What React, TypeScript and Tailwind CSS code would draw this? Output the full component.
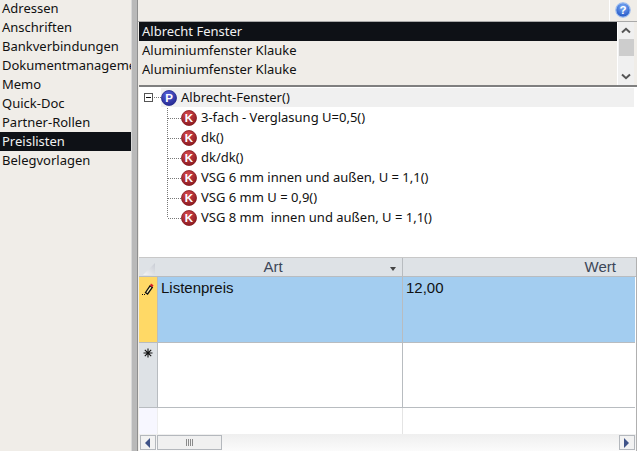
import React from 'react';

const sideItems = [
  'Adressen',
  'Anschriften',
  'Bankverbindungen',
  'Dokumentmanagement',
  'Memo',
  'Quick-Doc',
  'Partner-Rollen',
  'Preislisten',
  'Belegvorlagen',
];

const treeItems = [
  '3-fach - Verglasung U=0,5()',
  'dk()',
  'dk/dk()',
  'VSG 6 mm innen und außen, U = 1,1()',
  'VSG 6 mm U = 0,9()',
  'VSG 8 mm  innen und außen, U = 1,1()',
];

function Ball({ letter, id, light, dark }: { letter: string; id: string; light: string; dark: string }) {
  return (
    <svg width="16" height="16" viewBox="0 0 16 16" className="shrink-0">
      <defs>
        <radialGradient id={id} cx="0.4" cy="0.25" r="0.85">
          <stop offset="0" stopColor={light} />
          <stop offset="1" stopColor={dark} />
        </radialGradient>
      </defs>
      <circle cx="8" cy="8" r="7.5" fill={`url(#${id})`} stroke={dark} strokeWidth="0.8" />
      <text x="8" y="12.2" textAnchor="middle" fontSize="11.5" fontWeight="700" fill="#fff" fontFamily="Liberation Sans, sans-serif">
        {letter}
      </text>
    </svg>
  );
}

function ScrollButton({ dir }: { dir: 'left' | 'right' }) {
  return (
    <div className="w-[16px] h-[15px] shrink-0 border border-[#b4b8bd] bg-[#f2f2f2] flex items-center justify-center">
      <svg width="6" height="10" viewBox="0 0 6 10">
        <path d={dir === 'left' ? 'M5 0V10L0 5Z' : 'M0 0V10L5 5Z'} fill="#3f5388" />
      </svg>
    </div>
  );
}

function Chevron({ up }: { up?: boolean }) {
  return (
    <svg width="10" height="7" viewBox="0 0 10 7">
      <path d={up ? 'M1 5.5L5 1.8L9 5.5' : 'M1 1.5L5 5.2L9 1.5'} fill="none" stroke="#555" strokeWidth="2" />
    </svg>
  );
}

export default function App() {
  return (
    <div className="w-[637px] h-[451px] overflow-hidden flex bg-[#f0ede8] text-[#111] text-[13px] font-['Noto_Sans','Open_Sans',sans-serif]">
      {/* Left nav */}
      <div className="w-[131px] shrink-0 -mt-px overflow-hidden">
        {sideItems.map((item) => (
          <div
            key={item}
            className={`h-[19px] pl-[2px] leading-[19px] whitespace-nowrap ${
              item === 'Preislisten' ? 'bg-[#0e1116] text-[#f0f0f0]' : ''
            }`}
          >
            {item}
          </div>
        ))}
      </div>

      {/* Splitter */}
      <div className="w-[7px] shrink-0 bg-[#b9b9b9] border-r border-r-[#8f8f8f] border-l border-l-[#d8d8d8]" />

      <div className="flex-1 min-w-0 flex flex-col">
        {/* Top bar */}
        <div className="h-[22px] shrink-0 flex justify-end border-b border-[#a9a9a9]">
          <div className="w-[28px] border-l border-white flex items-center justify-center pr-[2px] pb-[1px]">
            <svg width="16" height="16" viewBox="0 0 16 16">
              <defs>
                <radialGradient id="help" cx="0.5" cy="0.3" r="0.75">
                  <stop offset="0" stopColor="#7fb0f7" />
                  <stop offset="1" stopColor="#1a4cc0" />
                </radialGradient>
              </defs>
              <circle cx="8" cy="8" r="7.2" fill="url(#help)" stroke="#9cbdf0" strokeWidth="1.2" />
              <text x="8" y="12" textAnchor="middle" fontSize="11.5" fontWeight="700" fill="#fff" fontFamily="Liberation Sans, sans-serif">
                ?
              </text>
            </svg>
          </div>
        </div>

        {/* Supplier list */}
        <div className="h-[63px] shrink-0 flex pl-[1px] overflow-hidden">
          <div className="flex-1 min-w-0 h-[62px] overflow-hidden">
            <div className="h-[19px] pl-[3px] leading-[19px] bg-[#0e1116] text-[#f0f0f0]">Albrecht Fenster</div>
            <div className="h-[19px] pl-[3px] leading-[19px]">Aluminiumfenster Klauke</div>
            <div className="h-[19px] pl-[3px] leading-[19px]">Aluminiumfenster Klauke</div>
            <div className="h-[19px] pl-[3px] leading-[21px]">Aluminiumfenster Hoffmann</div>
          </div>
          <div className="w-[17px] mr-[3px] shrink-0 bg-[#f0f0f0] border-l border-white flex flex-col items-center">
            <div className="h-[17px] flex items-center justify-center"><Chevron up /></div>
            <div className="w-[15px] h-[17px] bg-[#cdcdcd]" />
            <div className="flex-1" />
            <div className="h-[18px] flex items-center justify-center"><Chevron /></div>
          </div>
        </div>

        {/* Tree */}
        <div className="h-[172px] shrink-0 ml-[1px] bg-white border-t-2 border-t-[#7f7f7f] pr-[3px] pt-[1px] overflow-hidden">
          <div className="h-[20px] flex items-start">
            <svg width="22" height="20" viewBox="0 0 22 20" className="shrink-0">
              <rect x="5.5" y="5.5" width="8" height="8" fill="#fff" stroke="#555" />
              <path d="M7 9.5H12" stroke="#111" />
              <path d="M15 9.5H22" stroke="#777" strokeDasharray="1 1" />
            </svg>
            <div className="flex-1 h-[19px] bg-[#f0f0f0] flex items-center gap-[4px]">
              <Ball letter="P" id="ball-p" light="#5560d8" dark="#21248c" />
              <span>Albrecht-Fenster()</span>
            </div>
          </div>
          {treeItems.map((item, i) => (
            <div key={item} className="h-[20px] flex items-center whitespace-pre">
              <svg width="42" height="20" viewBox="0 0 42 20" className="shrink-0">
                <path d={i === treeItems.length - 1 ? 'M28.5 0V10' : 'M28.5 0V20'} stroke="#777" strokeDasharray="1 1" />
                <path d="M29 10.5H42" stroke="#777" strokeDasharray="1 1" />
              </svg>
              <Ball letter="K" id={`ball-k-${i}`} light="#d4474b" dark="#84161c" />
              <span className="ml-[4px]">{item}</span>
            </div>
          ))}
        </div>

        {/* Datasheet */}
        <div className="flex-1 min-h-0 ml-[1px] flex flex-col bg-white border-t border-t-[#c8c8c8] border-r border-r-[#b0b0b0] font-['Liberation_Sans',Arial,sans-serif] text-[15px]">
          <div className="h-[19px] shrink-0 flex bg-[#dee2e6] border-b border-[#b8bcc0] text-[15px] text-[#3c4658] leading-[17px]">
            <div className="w-[19px] shrink-0 pl-[4px] pt-[5px]">
              <svg width="12" height="12" viewBox="0 0 12 12" className="block">
                <defs>
                  <linearGradient id="corner" x1="0" y1="1" x2="1" y2="0">
                    <stop offset="0" stopColor="#f4f5f7" />
                    <stop offset="1" stopColor="#c8ccd4" />
                  </linearGradient>
                </defs>
                <path d="M12 0V12H0Z" fill="url(#corner)" />
              </svg>
            </div>
            <div className="w-[245px] shrink-0 border-r border-[#b8bcc0] relative text-center pr-[14px]">
              Art
              <svg width="6" height="4" viewBox="0 0 6 4" className="absolute right-[6px] top-[9px]">
                <path d="M0 0H6L3 4Z" fill="#444" />
              </svg>
            </div>
            <div className="flex-1 text-right pr-[20px]">Wert</div>
          </div>

          <div className="h-[66px] shrink-0 flex bg-[#a3cdf0] border-b border-[#b8bcc0] mr-[1px] text-[#111] leading-[20px]">
            <div className="w-[19px] shrink-0 bg-[#ffd966] border-r border-[#b8bcc0] pl-[3px] pt-[6px]">
              <svg width="12" height="12" viewBox="0 0 12 12" className="block">
                <path d="M3.5 9.5L8 2.8L10.3 4.4L5.6 11Z" fill="#fff3b0" stroke="#111" strokeWidth="1.3" />
                <path d="M8 2.5L9 0.6L11.5 2.2L10.3 4.2Z" fill="#d8202a" />
                <path d="M0 11.5H1M2 11.5H3" stroke="#111" />
              </svg>
            </div>
            <div className="w-[245px] shrink-0 border-r border-[#b8bcc0] pl-[3px] pt-[1px]">Listenpreis</div>
            <div className="flex-1 pl-[3px] pt-[1px]">12,00</div>
          </div>

          <div className="h-[65px] shrink-0 flex border-b border-[#b8bcc0] mr-[1px]">
            <div className="w-[19px] shrink-0 bg-[#dee2e6] border-r border-[#b8bcc0] flex justify-center pt-[5px]">
              <svg width="10" height="10" viewBox="0 0 10 10">
                <path d="M5 0.5V9.5M0.5 5H9.5M1.8 1.8L8.2 8.2M8.2 1.8L1.8 8.2" stroke="#111" strokeWidth="1.1" />
              </svg>
            </div>
            <div className="w-[245px] shrink-0 border-r border-[#b8bcc0]" />
            <div className="flex-1" />
          </div>

          <div className="flex-1 min-h-0 flex mr-[1px]">
            <div className="w-[19px] shrink-0 bg-[#f7f7ff] border-r border-[#eeeeee]" />
            <div className="w-[245px] shrink-0 border-r border-[#e4e4e4]" />
            <div className="flex-1" />
          </div>

          {/* Horizontal scrollbar */}
          <div className="h-[17px] shrink-0 flex items-center pl-[1px] pr-[1px] bg-gradient-to-b from-[#efefef] to-[#fbfbfb]">
            <ScrollButton dir="left" />
            <div className="w-[65px] h-[15px] ml-[1px] border border-[#b4b8bd] bg-[#f0f0f0] flex items-center justify-center gap-[1px]">
              <div className="w-px h-[7px] bg-[#8a8a8a]" />
              <div className="w-px h-[7px] bg-[#8a8a8a]" />
              <div className="w-px h-[7px] bg-[#8a8a8a]" />
              <div className="w-px h-[7px] bg-[#8a8a8a]" />
            </div>
            <div className="flex-1" />
            <ScrollButton dir="right" />
          </div>
        </div>
      </div>
    </div>
  );
}
